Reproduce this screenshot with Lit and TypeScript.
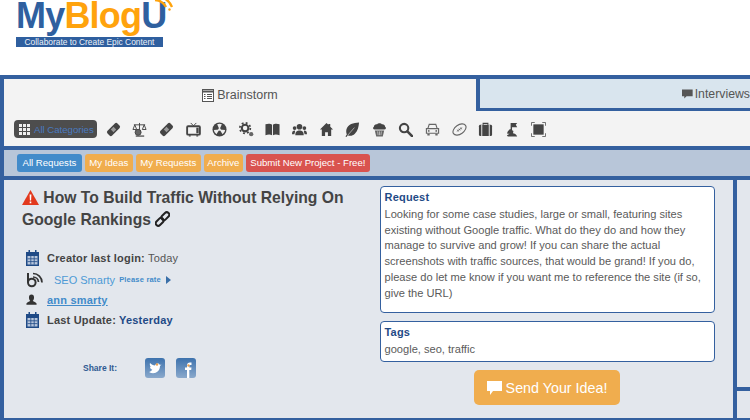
import { LitElement, html, css, svg } from "lit";
import { customElement } from "lit/decorators.js";

const D = "#444";
const icons = [
  svg`<g transform="rotate(-45 8 8)"><rect x="0.5" y="4.500" width="15" height="7" rx="2" fill="${D}"/><rect x="6" y="6" width="4" height="4" fill="#999"/></g>`,
  svg`<g fill="none" stroke="${D}" stroke-width="1"><path d="M8 1v12M2 3h12M3 3L1 8h4zM13 3l-2 5h4z"/><circle cx="6.500" cy="11" r="3.200" fill="#666" stroke="#444"/><path d="M4 15h9" stroke-width="1.300"/></g>`,
  svg`<g transform="rotate(-45 8 8)"><rect x="0.5" y="4.500" width="15" height="7" rx="2" fill="${D}"/><rect x="6" y="6" width="4" height="4" fill="#999"/></g>`,
  svg`<path d="M5 1l3 3 3-3" fill="none" stroke="${D}"/><rect x="1.200" y="4.500" width="13.600" height="9" rx="1" fill="none" stroke="${D}" stroke-width="2"/><path d="M3 14h2v1.500H3zM11 14h2v1.500h-2z" fill="${D}"/><rect x="11" y="6" width="2.500" height="6" fill="${D}"/>`,
  svg`<circle cx="8" cy="8" r="7.500" fill="${D}"/><path d="M8 8L5.500 2.500a6 6 0 0 1 5 0zM8 8l6 .5a6 6 0 0 1-2.700 4.600zM8 8l-3.300 5.100A6 6 0 0 1 2 8.500z" fill="#eee"/><circle cx="8" cy="8" r="1.400" fill="#eee"/>`,
  svg`<circle cx="6.500" cy="6.500" r="3.500" fill="none" stroke="${D}" stroke-width="2.200"/><circle cx="6.500" cy="6.500" r="5.600" fill="none" stroke="${D}" stroke-width="1.800" stroke-dasharray="2 2.400"/><circle cx="13" cy="13" r="2.300" fill="#666"/>`,
  svg`<path d="M0.500 2.500C3 1.500 6 1.500 7.500 3v11C6 13 3 13 .5 14zM15.500 2.500C13 1.500 10 1.500 8.500 3v11c1.500-1 4.500-1 7 0z" fill="${D}"/>`,
  svg`<g fill="${D}"><circle cx="8" cy="5" r="3"/><path d="M3.500 14c0-4 2-5 4.500-5s4.500 1 4.500 5z"/><circle cx="2.800" cy="6.500" r="2"/><circle cx="13.200" cy="6.500" r="2"/><path d="M0 13c0-3 1-4 3-4 .5 0 .5 1-.5 4zM16 13c0-3-1-4-3-4-.5 0-.5 1 .5 4z"/></g>`,
  svg`<path d="M8 1L1 8h2v7h3.500v-4h3v4H13V8h2l-3-3V2h-2v1z" fill="${D}"/>`,
  svg`<path d="M15 .5C9 1 3 2 1.500 8c-.5 2.500 0 4 .5 5L.5 15.500l1 .5L3 14c2 1 5 1 7.500-1.500C14 9 14.500 5 15 .5z" fill="${D}"/><path d="M3 14L10 6" stroke="#eee" stroke-width=".6"/>`,
  svg`<path d="M3 8C1 8 .5 6 2 5c0-2 2-3 3.500-2.500C6.500 1 9.500 1 10.500 2.500 12 2 14 3 14 5c1.500 1 1 3-1 3z" fill="${D}"/><path d="M3 9h10l-1.500 6.500h-7z" fill="#666"/><path d="M6 10l.5 4M8 10v4M10 10l-.5 4" stroke="#ddd" stroke-width=".7"/>`,
  svg`<circle cx="6.500" cy="6.500" r="4.500" fill="none" stroke="${D}" stroke-width="2.200"/><path d="M10 10l5 5" stroke="${D}" stroke-width="2.800" stroke-linecap="round"/>`,
  svg`<path d="M3 7l1.500-4.500h7L13 7M1.500 7h13v5h-13z" fill="none" stroke="#666" stroke-width="1.200"/><path d="M2.500 12.500h2.500v2H2.500zM11 12.500h2.500v2H11z" fill="#666"/><circle cx="4" cy="9.500" r="1" fill="#666"/><circle cx="12" cy="9.500" r="1" fill="#666"/>`,
  svg`<g transform="rotate(-35 8 8)"><ellipse cx="8" cy="8" rx="7.800" ry="4.800" fill="none" stroke="#666" stroke-width="1.200"/><path d="M4.500 8h7M6 6.800v2.400M8 6.800v2.400M10 6.800v2.400" stroke="#666" stroke-width=".8"/></g>`,
  svg`<path d="M5.500 3V1.500h5V3" fill="none" stroke="${D}" stroke-width="1.200"/><rect x="1" y="3" width="14" height="12" rx="1.500" fill="${D}"/><path d="M4 3v12M12 3v12" stroke="#eee"/>`,
  svg`<path d="M6 1h7l-1.500 2L13 5.500H7.500V9H6z" fill="${D}"/><path d="M5.500 7.500C3 9 2 11 2.500 12.500H5l-3 1.500 1 1.500h10c-1-2.500-3-3.500-4.500-3.500L9 9.500z" fill="${D}"/>`,
  svg`<rect x="2.500" y="2.500" width="11" height="11" fill="${D}"/><path d="M.5 4V.5H4M12 .5h3.500V4M15.500 12v3.500H12M4 15.500H.5V12" fill="none" stroke="#666"/>`,
];

const calendar = html`<svg class="ic" width="13" height="16" viewBox="0 0 13 16"><path d="M0 2h13v14H0z" fill="#1f4a86"/><path d="M2.500 0h1.500v4H2.500zM9 0h1.500v4H9z" fill="#1f4a86"/><path d="M1.500 6h10v8.500h-10z" fill="#b7c6dc"/><path d="M1.500 8.800h10M1.500 11.600h10M4.800 6v8.500M8.200 6v8.500" stroke="#1f4a86" stroke-width=".8"/></svg>`;

@customElement("app-root")
export class AppRoot extends LitElement {
  static styles = css`
    :host { display: block; width: 750px; height: 420px; overflow: hidden; background: #fff; font-family: "Liberation Sans", Arial, sans-serif; color: #555; }
    .header { height: 75px; padding-left: 16px; box-sizing: border-box; }
    .logo { position: relative; width: 160px; }
    .brand { font-size: 36px; font-weight: 700; line-height: 31px; letter-spacing: -0.8px; white-space: nowrap; height: 37px; color: #2f609f; }
    .brand b { color: #ffa30d; font-weight: 700; }
    .arcs { position: absolute; left: 135px; top: -1px; }
    .tagline { width: 147px; height: 10px; background: #2f5f9f; color: #eef2f8; font-size: 8.400px; line-height: 10px; text-align: center; white-space: nowrap; overflow: hidden; }
    .frame { border-top: 4px solid #34609f; border-left: 4px solid #34609f; height: 345px; box-sizing: border-box; display: flex; flex-direction: column; }
    .tabs { display: flex; height: 32px; background: #f3f3f3; }
    .tab1 { width: 472px; display: flex; align-items: center; justify-content: center; gap: 3px; font-size: 12.500px; color: #555; box-sizing: border-box; }
    .tab2 { flex: 1; background: #d9e5ee; border-left: 4px solid #34609f; border-bottom: 3px solid #34609f; display: flex; align-items: center; padding-left: 202px; gap: 2px; font-size: 12.300px; white-space: nowrap; overflow: hidden; color: #555; box-sizing: border-box; }
    .cats { height: 35px; background: #f3f3f3; display: flex; align-items: center; padding-left: 10px; box-sizing: border-box; padding-top: 1px; }
    .pill { width: 83px; height: 18px; box-sizing: border-box; background: #4d4d4d; border-radius: 4px; display: flex; align-items: center; gap: 2px; padding-left: 5px; color: #4a7ac0; font-size: 9.600px; white-space: nowrap; margin-right: 3px; }
    .grid { display: grid; grid-template-columns: repeat(3, 3px); gap: 1px; width: 11px; margin-right: 2px; }
    .grid i { width: 3px; height: 3px; background: #eee; display: block; }
    .cat { width: 26.600px; display: flex; justify-content: center; flex: none; }
    .filters { border-top: 4px solid #34609f; border-bottom: 4px solid #34609f; height: 34px; box-sizing: border-box; background: #b8c6d9; display: flex; align-items: center; gap: 3px; padding: 0 0 1px 13px; }
    .btn { height: 18px; line-height: 18px; border-radius: 3px; padding: 0 4.500px; font-size: 9.600px; color: #fff; white-space: nowrap; }
    .blue { background: #428bca; padding: 0 5.500px; } .orange { background: #f0ad4e; } .red { background: #d9534f; }
    .arch { padding: 0 3.500px; }
    .body { flex: 1; display: flex; min-height: 0; background: #e3e7ed; border-bottom: 2px solid #34609f; }
    .main { width: 733px; flex: none; display: flex; border-right: 4px solid #34609f; box-sizing: border-box; }
    .side { flex: 1; border-bottom: 4px solid #34609f; height: 211px; box-sizing: border-box; }
    .left { width: 376px; flex: none; padding: 7px 0 0 18px; box-sizing: border-box; }
    h1 { margin: 0; font-size: 15.700px; line-height: 22px; color: #444; font-weight: 700; }
    h1 svg { vertical-align: -2px; }
    .meta { margin-top: 15px; font-size: 11px; display: flex; flex-direction: column; padding-left: 4px; }
    .row { display: flex; align-items: center; height: 20.300px; white-space: nowrap; letter-spacing: 0.2px; }
    .row.first { height: 23.500px; }
    .ic { flex: none; margin-right: 8px; }
    .row strong { color: #444; margin-right: 3px; }
    .navy { color: #1f4a86; font-weight: 700; }
    .seo { color: #4e9ad6; margin-left: 10px; letter-spacing: 0; margin-right: 0; }
    .blog { margin-right: 0; }
    .rate { color: #428bca; font-size: 7.500px; font-weight: 700; margin-left: 4px; }
    .tri { width: 0; height: 0; border-left: 5px solid #3a6fa8; border-top: 4px solid transparent; border-bottom: 4px solid transparent; margin-left: 5px; }
    .user { color: #428bca; font-weight: 700; text-decoration: underline; }
    .person { margin-right: 10px; }
    .share { display: flex; align-items: center; margin: 28px 0 0 61px; }
    .share span { color: #2f5a92; font-size: 8.500px; font-weight: 700; width: 62px; }
    .soc { width: 20px; height: 20px; border-radius: 3px; background: linear-gradient(#3d72ad, #8aa9cc); margin-right: 11px; display: block; }
    .right { width: 335px; flex: none; padding-top: 6px; display: flex; flex-direction: column; align-items: stretch; }
    .box { background: #fff; border: 1px solid #34609f; border-radius: 4px; padding: 3px 4px 0 3.500px; box-sizing: border-box; font-size: 11.100px; line-height: 15.700px; color: #5a5a5a; }
    .box h2 { margin: 0 0 2px; font-size: 11px; line-height: 15px; color: #1f4a86; font-weight: 700; letter-spacing: 0.2px; }
    .req { height: 127px; }
    .tags { height: 41px; margin-top: 8px; }
    .send { align-self: center; margin: 8px 1px 0 0; width: 146px; height: 35px; background: #f0ad4e; border-radius: 5px; color: #fff; display: flex; align-items: center; justify-content: center; gap: 4px; font-size: 14.300px; white-space: nowrap; }
  `;

  render() {
    return html`
      <div class="header">
        <div class="logo">
          <div class="brand">My<b>Blog</b>U</div>
          <svg class="arcs" width="24" height="13" viewBox="0 0 24 13"><g fill="none" stroke="#ffa30d" stroke-width="2.300"><path d="M4 1a13 13 0 0 1 11 7"/><path d="M10 -2a17 17 0 0 1 11 10"/></g><circle cx="18.500" cy="10.500" r="1.200" fill="#ffa30d"/></svg>
          <div class="tagline">Collaborate to Create Epic Content</div>
        </div>
      </div>
      <div class="frame">
        <div class="tabs">
          <div class="tab1">
            <svg width="12" height="13" viewBox="0 0 12 13"><rect x=".5" y=".5" width="11" height="12" fill="#fff" stroke="#555"/><path d="M.5 2.500h11" stroke="#555" stroke-width="2"/><path d="M2 5.500h1.500M5 5.500h5M2 7.500h1.500M5 7.500h5M2 9.500h1.500M5 9.500h5" stroke="#555"/></svg>
            <span>Brainstorm</span>
          </div>
          <div class="tab2">
            <svg width="14" height="12" viewBox="0 0 14 12"><path d="M0 0h14v9H6l-3 3V9H0z" fill="#555"/></svg>
            <span>Interviews</span>
          </div>
        </div>
        <div class="cats">
          <div class="pill">
            <span class="grid">${Array.from({ length: 9 }, () => html`<i></i>`)}</span>
            All Categories
          </div>
          ${icons.map((i) => html`<span class="cat"><svg width="15" height="15" viewBox="0 0 16 16">${i}</svg></span>`)}
        </div>
        <div class="filters">
          <span class="btn blue">All Requests</span>
          <span class="btn orange">My Ideas</span>
          <span class="btn orange">My Requests</span>
          <span class="btn orange arch">Archive</span>
          <span class="btn red">Submit New Project - Free!</span>
        </div>
        <div class="body">
          <div class="main">
            <div class="left">
              <h1>
                <svg width="17" height="15" viewBox="0 0 17 15"><path d="M8.500 0L17 15H0z" fill="#e2391e"/><path d="M7.600 4.500h1.800l-.3 6H7.900zM7.700 11.500h1.600v1.700H7.700z" fill="#fff"/></svg>
                How To Build Traffic Without Relying On Google Rankings
                <svg width="15" height="16" viewBox="0 0 15 16"><g fill="none" stroke="#222" stroke-width="2" transform="rotate(-45 7.500 8)"><rect x="-1" y="5.500" width="9" height="5" rx="2.500"/><rect x="7" y="5.500" width="9" height="5" rx="2.500"/></g></svg>
              </h1>
              <div class="meta">
                <div class="row first">${calendar}<strong>Creator last login:</strong> Today</div>
                <div class="row">
                  <svg class="ic blog" width="18" height="16" viewBox="0 0 18 16"><path d="M2 1v9.500" stroke="#333" stroke-width="2"/><circle cx="5.800" cy="10.500" r="3.800" fill="none" stroke="#333" stroke-width="2"/><path d="M7 1.500a9 9 0 0 1 9 9M7 5a5.500 5.500 0 0 1 5.500 5" fill="none" stroke="#333" stroke-width="1.700"/></svg>
                  <span class="seo">SEO Smarty</span><span class="rate">Please rate</span><span class="tri"></span>
                </div>
                <div class="row">
                  <svg class="ic person" width="11" height="12" viewBox="0 0 13 13"><path d="M6.500 0c2 0 3 1.500 3 3.500S8.500 7 8 7.500c0 1 3.500 1.500 4.500 3V12H.5v-1.500c1-1.500 4.500-2 4.500-3C4.500 7 3.500 5.500 3.500 3.500S4.500 0 6.500 0z" fill="#333"/></svg>
                  <span class="user">ann smarty</span>
                </div>
                <div class="row">${calendar}<strong>Last Update:</strong><span class="navy">Yesterday</span></div>
              </div>
              <div class="share">
                <span>Share It:</span>
                <svg class="soc" viewBox="0 0 20 20"><path d="M4 14c5 3 11 0 11-6l1.500-1.500-1.700.4C14 5 11 5 10 7.500 8 7.500 6.500 6.500 5 5c-.5 1.500 0 3 1 4l-1-.2c0 1.500 1 2.500 2.300 3C6.500 13 5 14 4 14z" fill="#fff"/><circle cx="12" cy="6.500" r="1.200" fill="#e8a050"/></svg>
                <svg class="soc" viewBox="0 0 20 20"><path d="M11 20v-8H9V9.500h2V7.500C11 5.500 12 4.500 14 4.500h1.500V7H14.300c-.8 0-1 .4-1 1v1.500h2.200l-.3 2.500h-1.900v8z" fill="#fff"/><circle cx="12.500" cy="7.500" r="1.200" fill="#e8a050"/></svg>
              </div>
            </div>
            <div class="right">
              <div class="box req">
                <h2>Request</h2>
                Looking for some case studies, large or small, featuring sites existing without Google traffic. What do they do and how they manage to survive and grow! If you can share the actual screenshots with traffic sources, that would be grand! If you do, please do let me know if you want me to reference the site (if so, give the URL)
              </div>
              <div class="box tags">
                <h2>Tags</h2>
                google, seo, traffic
              </div>
              <div class="send">
                <svg width="15" height="14" viewBox="0 0 15 14"><path d="M0 0h15v10H6l-3 4v-4H0z" fill="#fff"/></svg>
                Send Your Idea!
              </div>
            </div>
          </div>
          <div class="side"></div>
        </div>
      </div>
    `;
  }
}
